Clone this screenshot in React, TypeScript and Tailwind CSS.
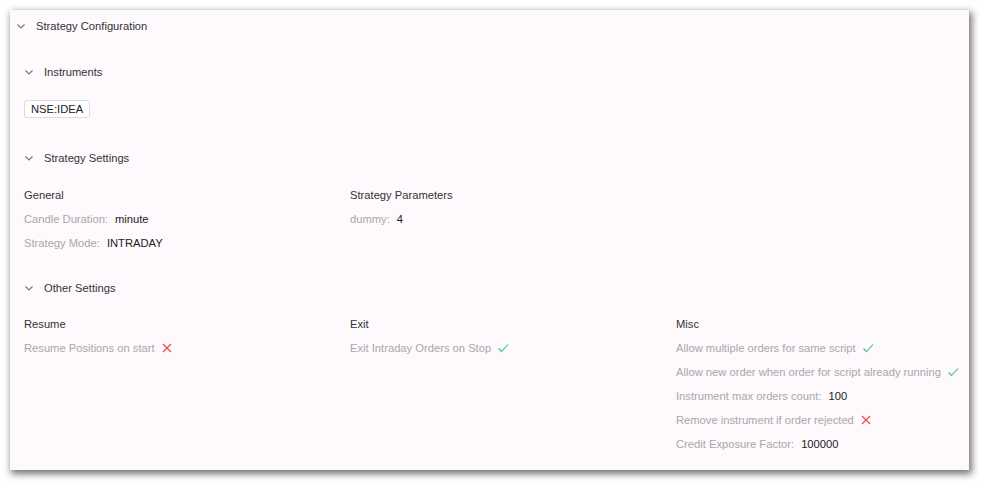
import React from 'react';

const Chevron = ({ className = '' }: { className?: string }) => (
  <svg className={className} width="10" height="10" viewBox="0 0 10 10" fill="none">
    <path d="M1.5 3.5L5 7l3.5-3.5" stroke="#757575" strokeWidth="1.1" />
  </svg>
);

const Check = () => (
  <svg width="12" height="12" viewBox="0 0 12 12" fill="none" className="ml-1.5">
    <path d="M1.5 6.5l3 3L11 2.5" stroke="#3fbf7f" strokeWidth="1.1" />
  </svg>
);

const Cross = () => (
  <svg width="12" height="12" viewBox="0 0 12 12" fill="none" className="ml-1.5">
    <path d="M2 2l8 8M10 2l-8 8" stroke="#ef4444" strokeWidth="1.1" />
  </svg>
);

const SectionHeader = ({ title }: { title: string }) => (
  <div className="flex items-center h-6 gap-[10px]">
    <Chevron />
    <span className="text-[#333]">{title}</span>
  </div>
);

const Field = ({ label, value }: { label: string; value: string }) => (
  <div className="flex items-center h-6">
    <span className="text-[#a8a8a8]">{label}:</span>
    <span className="ml-[7px] text-[#222]">{value}</span>
  </div>
);

const Flag = ({ label, on }: { label: string; on: boolean }) => (
  <div className="flex items-center h-6">
    <span className="text-[#a8a8a8]">{label}</span>
    {on ? <Check /> : <Cross />}
  </div>
);

const ColTitle = ({ children }: { children: React.ReactNode }) => (
  <div className="h-6 flex items-center text-[#333]">{children}</div>
);

export default function App() {
  return (
    <div className="w-[985px] h-[486px] bg-white pt-[10px] pl-[10px]" style={{ fontFamily: '"Liberation Sans", Arial, sans-serif' }}>
      <div className="w-[959px] h-[460px] bg-[#fdf9fd] text-[11.2px] shadow-[2px_3px_7px_1px_rgba(0,0,0,0.55)]">
        {/* Strategy Configuration */}
        <div className="px-[6px] pt-[4px]">
          <div className="flex items-center h-6 gap-[10px]">
            <Chevron />
            <span className="text-[#333]">Strategy Configuration</span>
          </div>
        </div>

        <div className="pl-[14px] pr-2">
          {/* Instruments */}
          <div className="mt-[22px]">
            <SectionHeader title="Instruments" />
            <div className="mt-[16px] flex">
              <span className="h-[18px] px-[6px] flex items-center border border-[#dcdcdc] rounded-[3px] bg-white text-[#222]">NSE:IDEA</span>
            </div>
          </div>

          {/* Strategy Settings */}
          <div className="mt-[28px]">
            <SectionHeader title="Strategy Settings" />
            <div className="mt-[13px] grid grid-cols-[326px_326px_1fr]">
              <div>
                <ColTitle>General</ColTitle>
                <Field label="Candle Duration" value="minute" />
                <Field label="Strategy Mode" value="INTRADAY" />
              </div>
              <div>
                <ColTitle>Strategy Parameters</ColTitle>
                <Field label="dummy" value="4" />
              </div>
            </div>
          </div>

          {/* Other Settings */}
          <div className="mt-[21px]">
            <SectionHeader title="Other Settings" />
            <div className="mt-3 grid grid-cols-[326px_326px_1fr]">
              <div>
                <ColTitle>Resume</ColTitle>
                <Flag label="Resume Positions on start" on={false} />
              </div>
              <div>
                <ColTitle>Exit</ColTitle>
                <Flag label="Exit Intraday Orders on Stop" on={true} />
              </div>
              <div>
                <ColTitle>Misc</ColTitle>
                <Flag label="Allow multiple orders for same script" on={true} />
                <Flag label="Allow new order when order for script already running" on={true} />
                <Field label="Instrument max orders count" value="100" />
                <Flag label="Remove instrument if order rejected" on={false} />
                <Field label="Credit Exposure Factor" value="100000" />
              </div>
            </div>
          </div>
        </div>
      </div>
    </div>
  );
}
